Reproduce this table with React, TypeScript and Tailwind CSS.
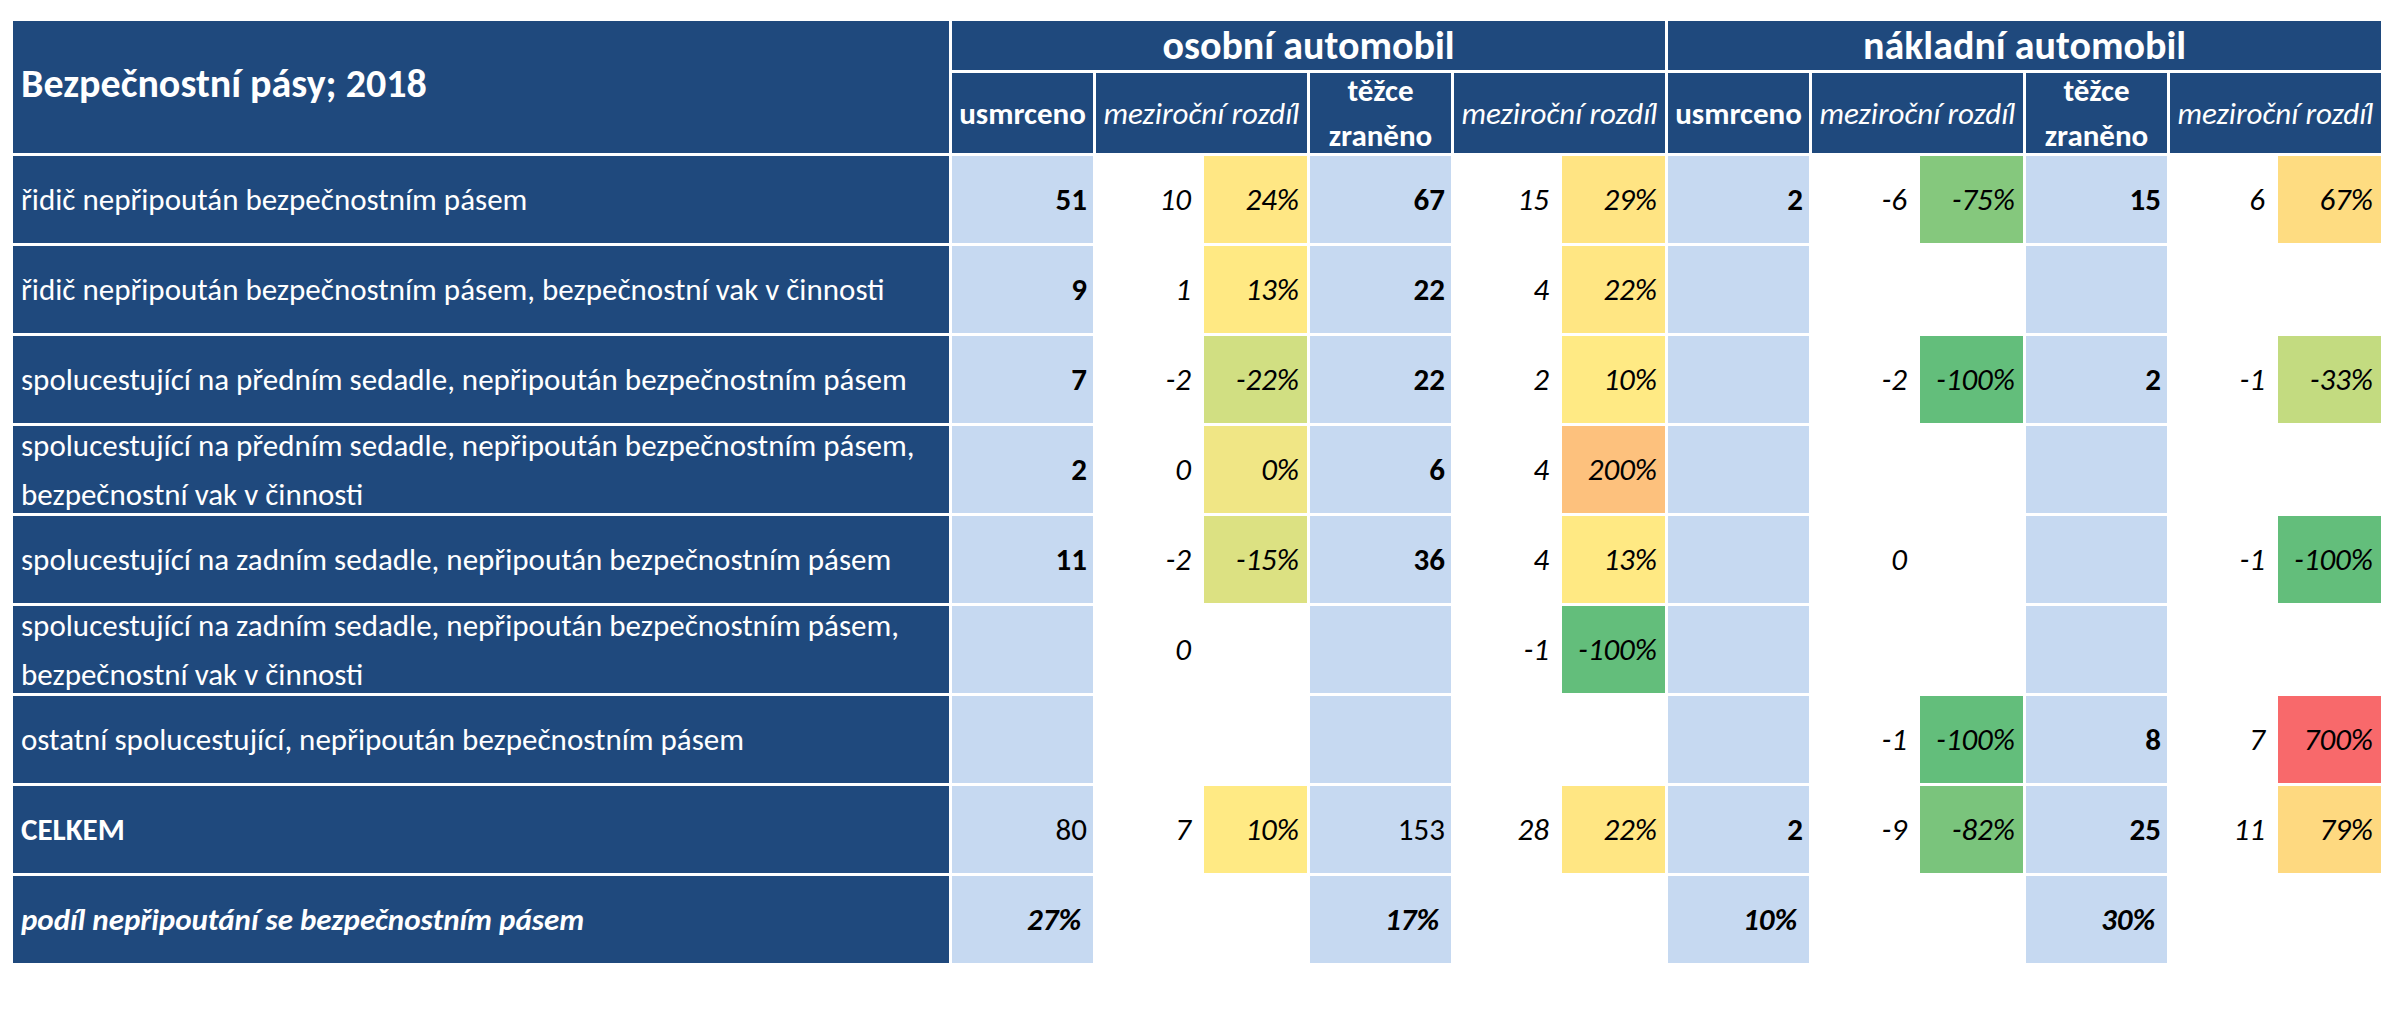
import React from 'react';

type Cell = { v?: string; d?: string; p?: string; pc?: string };
type Row = { label: React.ReactNode; kind?: 'total' | 'share'; cells: Cell[] };

const E: Cell = {};

const rows: Row[] = [
    {
        label: 'řidič nepřipoután bezpečnostním pásem',
        cells: [
            { v: '51', d: '10', p: '24%', pc: 'bg-[#ffe784]' },
            { v: '67', d: '15', p: '29%', pc: 'bg-[#ffe483]' },
            { v: '2', d: '-6', p: '-75%', pc: 'bg-[#85c87d]' },
            { v: '15', d: '6', p: '67%', pc: 'bg-[#fedc81]' }
        ]
    },
    {
        label: 'řidič nepřipoután bezpečnostním pásem, bezpečnostní vak v činnosti',
        cells: [
            { v: '9', d: '1', p: '13%', pc: 'bg-[#ffe983]' },
            { v: '22', d: '4', p: '22%', pc: 'bg-[#ffe683]' },
            E,
            E
        ]
    },
    {
        label: 'spolucestující na předním sedadle, nepřipoután bezpečnostním pásem',
        cells: [
            { v: '7', d: '-2', p: '-22%', pc: 'bg-[#d1df82]' },
            { v: '22', d: '2', p: '10%', pc: 'bg-[#ffea84]' },
            { d: '-2', p: '-100%', pc: 'bg-[#63be7b]' },
            { v: '2', d: '-1', p: '-33%', pc: 'bg-[#c3db80]' }
        ]
    },
    {
        label: (
            <>
                spolucestující na předním sedadle, nepřipoután bezpečnostním pásem,
                <br />
                bezpečnostní vak v činnosti
            </>
        ),
        cells: [
            { v: '2', d: '0', p: '0%', pc: 'bg-[#f0e685]' },
            { v: '6', d: '4', p: '200%', pc: 'bg-[#fdc17d]' },
            E,
            E
        ]
    },
    {
        label: 'spolucestující na zadním sedadle, nepřipoután bezpečnostním pásem',
        cells: [
            { v: '11', d: '-2', p: '-15%', pc: 'bg-[#dce182]' },
            { v: '36', d: '4', p: '13%', pc: 'bg-[#ffe983]' },
            { d: '0' },
            { d: '-1', p: '-100%', pc: 'bg-[#63be7b]' }
        ]
    },
    {
        label: (
            <>
                spolucestující na zadním sedadle, nepřipoután bezpečnostním pásem,
                <br />
                bezpečnostní vak v činnosti
            </>
        ),
        cells: [
            { d: '0' },
            { d: '-1', p: '-100%', pc: 'bg-[#63be7b]' },
            E,
            E
        ]
    },
    {
        label: 'ostatní spolucestující, nepřipoután bezpečnostním pásem',
        cells: [
            E,
            E,
            { d: '-1', p: '-100%', pc: 'bg-[#63be7b]' },
            { v: '8', d: '7', p: '700%', pc: 'bg-[#f8696b]' }
        ]
    },
    {
        label: 'CELKEM',
        kind: 'total',
        cells: [
            { v: '80', d: '7', p: '10%', pc: 'bg-[#ffea84]' },
            { v: '153', d: '28', p: '22%', pc: 'bg-[#ffe683]' },
            { v: '2', d: '-9', p: '-82%', pc: 'bg-[#7ac47c]' },
            { v: '25', d: '11', p: '79%', pc: 'bg-[#fed980]' }
        ]
    },
    {
        label: 'podíl nepřipoutání se bezpečnostním pásem',
        kind: 'share',
        cells: [{ v: '27%' }, { v: '17%' }, { v: '10%' }, { v: '30%' }]
    }
];

const headCell = 'bg-[#1f497d] text-white flex items-center justify-center text-center';

const SubHeader: React.FC = () => (
    <>
        <div className={`${headCell} font-bold`}>usmrceno</div>
        <div className={`${headCell} col-span-2 italic`}>meziroční rozdíl</div>
        <div className={`${headCell} font-bold leading-[1.45]`}>
            těžce
            <br />
            zraněno
        </div>
        <div className={`${headCell} col-span-2 italic`}>meziroční rozdíl</div>
    </>
);

const App: React.FC = () => {
    return (
        <div className="min-h-screen bg-white pt-[21px] pl-[13px]">
            <div
                className="grid grid-cols-[936px_repeat(4,141px_105px_103px)] grid-rows-[49px_80px_repeat(9,87px)] gap-[3px] text-[31px] text-black"
                style={{ fontFamily: 'Carlito, Lato, "Open Sans", sans-serif' }}
            >
                {/* Header */}
                <div className="row-span-2 bg-[#1f497d] text-white font-bold text-[40px] flex items-center pl-[8px] pb-[6px]">
                    Bezpečnostní pásy; 2018
                </div>
                <div className={`${headCell} col-span-6 font-bold text-[40px]`}>osobní automobil</div>
                <div className={`${headCell} col-span-6 font-bold text-[40px]`}>nákladní automobil</div>
                <SubHeader />
                <SubHeader />

                {/* Body */}
                {rows.map((row, i) => (
                    <React.Fragment key={i}>
                        <div
                            className={`bg-[#1f497d] text-white flex items-center pl-[8px] leading-[1.55] whitespace-nowrap ${
                                row.kind === 'total' ? 'font-bold' : ''
                            } ${row.kind === 'share' ? 'font-bold italic' : ''}`}
                        >
                            <div>{row.label}</div>
                        </div>
                        {row.cells.map((c, j) => (
                            <React.Fragment key={j}>
                                <div
                                    className={`bg-[#c6d9f1] flex items-center justify-end ${
                                        row.kind === 'share'
                                            ? 'font-bold italic pr-[12px]'
                                            : row.kind === 'total' && j < 2
                                            ? 'pr-[6px]'
                                            : 'font-bold pr-[6px]'
                                    }`}
                                >
                                    {c.v}
                                </div>
                                <div className="flex items-center justify-end pr-[10px] italic">{c.d}</div>
                                <div className={`flex items-center justify-end pr-[8px] italic ${c.pc ?? ''}`}>{c.p}</div>
                            </React.Fragment>
                        ))}
                    </React.Fragment>
                ))}
            </div>
        </div>
    );
};

export default App;
